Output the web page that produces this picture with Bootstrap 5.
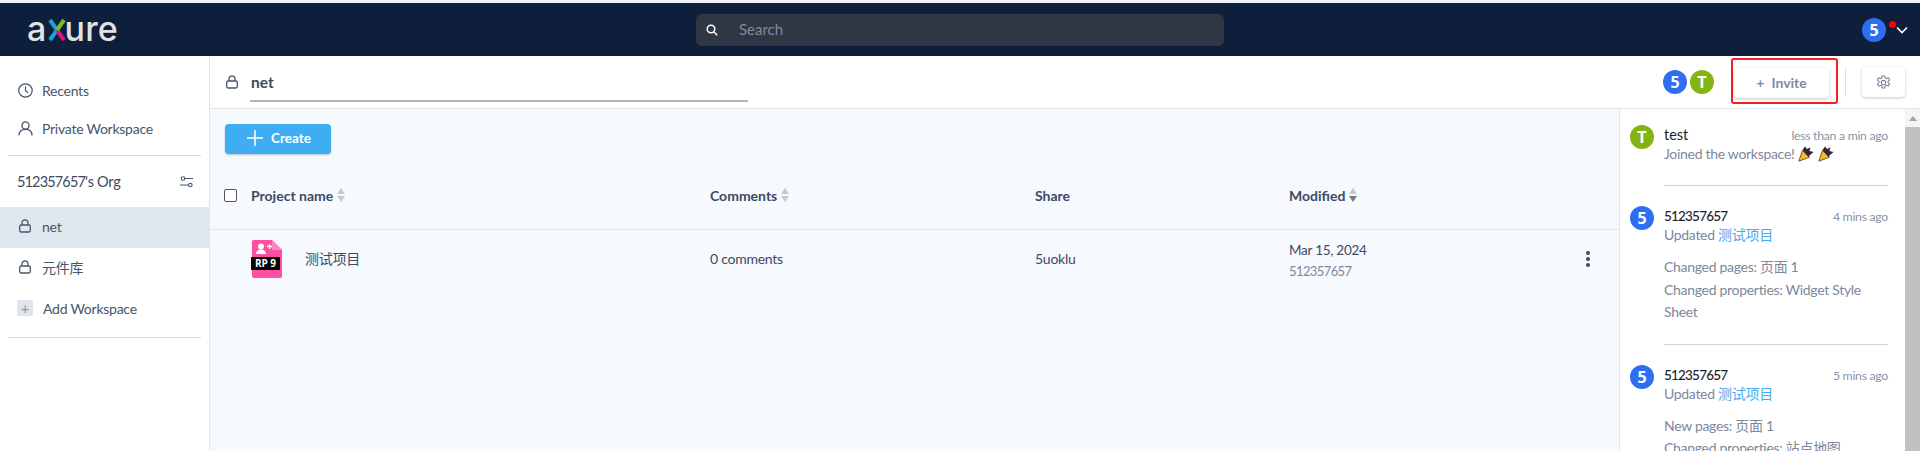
<!DOCTYPE html>
<html lang="en">
<head>
  <meta charset="UTF-8" />
  <meta name="viewport" content="width=device-width, initial-scale=1.0" />
  <title>Axure Cloud</title>
  <link href="https://cdn.jsdelivr.net/npm/bootstrap@5.3.0/dist/css/bootstrap.min.css" rel="stylesheet" />
  <style>
    html, body { height: 100%; }
    body {
      overflow: hidden;
      font-family: "Lato", "Noto Sans CJK SC", sans-serif;
      font-size: 13.5px;
      letter-spacing: -.25px;
      color: #3d4a63;
      background: #fff;
      border-top: 3px solid #eef0f7;
      display: flex;
      flex-direction: column;
    }
    .top-bar { height: 53px; background: #0e1f3b; flex: none; padding: 0 12px 0 27px; }
    .logo { width: 183px; color: #e2e2e2; font-size: 34px; line-height: 1; font-family: "Inter", sans-serif; font-weight: 500; letter-spacing: .2px; margin-top: -2px; }
    .logo svg { margin: 0 -1px 0 1px; vertical-align: -1px; }
    .search-box { width: 528px; height: 32px; margin-left: 486px; background: #2f3745; border-radius: 6px; padding-left: 10px; color: #7f8a99; font-size: 15px; letter-spacing: 0; gap: 21px; }
    .user-menu { margin-left: auto; gap: 10px; position: relative; }
    .avatar { width: 24px; height: 24px; border-radius: 50%; color: #fff; font-weight: 700; font-size: 16px; flex: none; font-family: "Open Sans", sans-serif; line-height: 1; letter-spacing: 0; }
    .av-blue { background: #2d6ff0; }
    .av-green { background: #84b414; }
    .red-dot { position: absolute; left: 27px; top: 3px; width: 7px; height: 7px; border-radius: 50%; background: #f00; }

    .side-bar { width: 210px; flex: none; border-right: 1px solid #e1e6ee; padding-top: 15px; }
    .side-item { height: 38px; padding-left: 18px; gap: 9px; font-size: 14px; color: #48546b; }
    .side-item.active-ws { height: 42px; background: #e1e7ef; }
    .side-item.ws { height: 41px; padding-left: 19px; gap: 11px; padding-bottom: 3px; }
    .side-item.add-ws { padding-left: 17px; gap: 10px; }
    .side-line { height: 1px; background: #d5dbe3; margin: 8px 8px 0; }
    .side-line.last-line { margin-top: 7px; }
    .org-row { height: 51px; padding: 0 16px 0 17px; font-size: 14.5px; }
    .org-num { letter-spacing: -.85px; }
    .add-box { width: 16px; height: 16px; background: #dfe5ed; border-radius: 2px; color: #8d99ab; font-size: 15px; line-height: 1; }

    .work-head { height: 53px; flex: none; border-bottom: 1px solid #e1e6ee; padding-left: 16px; }
    .ws-name { width: 498px; height: 38px; margin-left: 12px; margin-bottom: 0; margin-top: 8px; align-self: flex-start; border-bottom: 2px solid #b5b5b5; font-size: 15.5px; font-weight: 700; letter-spacing: 0; padding-top: 7px; padding-left: 1px; }
    .head-tools { margin-left: auto; padding-right: 15px; }
    .invite-wrap { border: 2px solid #f51f1f; border-radius: 3px; width: 107px; height: 46px; margin: -3px 7px 0 17px; padding: 8px 0 0 1px; }
    .tool-btn { height: 30px; background: #fff; border: 0; border-radius: 4px; box-shadow: 0 1px 3px rgba(40, 50, 70, .28); color: #7f8a9d; font-weight: 700; font-size: 14px; letter-spacing: 0; }
    .invite-btn { width: 95px; gap: 7px; }
    .gear-btn { width: 43px; margin-left: 16px; }
    .tool-sep { width: 1px; height: 30px; background: #dde2ea; }
    .av-first { margin-right: 3px; }

    .work-body { background: #f6f9fd; min-height: 0; }
    .list-pane { padding-top: 15px; }
    .create-btn { margin-left: 15px; width: 106px; height: 30px; background: #3fadf1; border: 0; border-radius: 4px; box-shadow: 0 1px 2px rgba(40, 60, 90, .3); color: #fff; font-weight: 700; font-size: 13.5px; gap: 8px; padding: 0 0 2px 22px; }
    .proj-grid { display: grid; grid-template-columns: 41px 459px 325px 254px 297px 33px; align-items: center; }
    .proj-head { height: 76px; padding-top: 8px; border-bottom: 1px solid #e1e6ee; font-weight: 700; font-size: 14px; letter-spacing: 0; color: #3d4a63; }
    .proj-head > div:first-child { padding-left: 14px; }
    .proj-row { height: 57px; font-size: 14px; }
    .check-box { display: block; width: 13px; height: 13px; border: 1px solid #555; border-radius: 2px; background: #fff; }
    .sort-mark { display: inline-block; vertical-align: -1px; margin-left: 4px; }
    .file-icon { position: relative; width: 30px; height: 38px; margin-left: 1px; margin-right: 23px; flex: none; }
    .rp-tag { position: absolute; left: -1px; top: 17px; width: 29px; height: 13px; background: #000; color: #fff; font-size: 10px; font-weight: 700; line-height: 13px; text-align: center; font-family: "Open Sans", sans-serif; letter-spacing: 0; }
    .date-cell { padding-top: 6px; }
    .date-sub { color: #7d889b; font-size: 13px; margin-top: 4px; letter-spacing: -.6px; }
    .date-main { line-height: 16px; font-size: 13.5px; }
    .kebab { width: 4px; gap: 2px; }
    .kebab i { display: block; width: 4px; height: 4px; border-radius: 50%; background: #3d4a63; }

    .feed-pane { width: 301px; flex: none; background: #fff; border-left: 1px solid #e1e6ee; overflow: hidden; }
    .feed-list { width: 285px; padding: 16px 17px 0 10px; }
    .feed-item { gap: 10px; }
    .feed-text { color: #7d889b; font-size: 14px; line-height: 20px; min-width: 0; flex: 1; letter-spacing: -.3px; }
    .feed-head { height: 19px; }
    .feed-sub { height: 20px; }
    .feed-name { color: #1a1f2b; font-size: 14.5px; letter-spacing: 0; }
    .feed-name.num-name { font-size: 13.5px; letter-spacing: -.8px; font-weight: 500; }
    .feed-time { color: #8a94a8; font-size: 12.3px; }
    .feed-link { color: #48a9ee; }
    .feed-detail { margin-top: 11px; line-height: 22.5px; }
    .detail-cjk { height: 22.5px; }
    .feed-line { height: 1px; background: #ccd3dc; margin: 20px 0 20px 34px; }
    .feed-line.first-line { margin-top: 21px; }
    .fake-scroll { width: 15px; flex: none; background: #f4f4f4; margin-left: auto; }
    .scroll-up { height: 18px; flex: none; }
    .scroll-up i { border-left: 4px solid transparent; border-right: 4px solid transparent; border-bottom: 5px solid #a3a3a3; }
    .scroll-thumb { flex: 1; background: #c1c1c1; }
  </style>
</head>
<body>

  <header class="top-bar d-flex align-items-center">
    <div class="logo">a<svg width="18" height="24" viewBox="0 0 18 24" fill="none" stroke-width="4"><path d="M2 2 L9 12 L2 22" stroke="#12a5e0" /><path d="M9 12 L16 22" stroke="#e0147f" /><path d="M9 12 L16 2" stroke="#7fba1d" /></svg>ure</div>
    <div class="search-box d-flex align-items-center">
      <svg width="12" height="12" viewBox="0 0 12 12" fill="none" stroke="#fff" stroke-width="1.5"><circle cx="5" cy="5" r="3.8" /><path d="M8 8l3.2 3.2" /></svg>
      <span>Search</span>
    </div>
    <div class="user-menu d-flex align-items-center">
      <span class="avatar av-blue d-flex align-items-center justify-content-center">5</span>
      <span class="red-dot"></span>
      <svg width="12" height="8" viewBox="0 0 12 8" fill="none" stroke="#fff" stroke-width="1.6"><path d="M1 1.500l5 5 5-5" /></svg>
    </div>
  </header>

  <div class="d-flex flex-grow-1 overflow-hidden">
    <nav class="side-bar">
      <div class="side-item d-flex align-items-center">
        <svg width="15" height="15" viewBox="0 0 15 15" fill="none" stroke="#48546b" stroke-width="1.2"><circle cx="7.5" cy="7.5" r="6.7" /><path d="M7.500 3.500v4.200l2.500 2" /></svg>
        <span>Recents</span>
      </div>
      <div class="side-item d-flex align-items-center">
        <svg width="15" height="15" viewBox="0 0 15 15" fill="none" stroke="#48546b" stroke-width="1.3"><circle cx="7.5" cy="4.5" r="3.6" /><path d="M1 14.500c0-4 2.500-6.200 6.500-6.200s6.500 2.200 6.500 6.200" /></svg>
        <span>Private Workspace</span>
      </div>
      <div class="side-line"></div>
      <div class="org-row d-flex align-items-center justify-content-between">
        <span><span class="org-num">512357657</span>'s Org</span>
        <svg width="13" height="12" viewBox="0 0 13 12" fill="none" stroke="#48546b" stroke-width="1.1"><circle cx="3" cy="2.500" r="1.800" /><path d="M5 2.500h8M0 9h8" /><circle cx="10.300" cy="9" r="1.800" /></svg>
      </div>
      <div class="side-item ws active-ws d-flex align-items-center">
        <svg width="12" height="14" viewBox="0 0 12 14" fill="none" stroke="#48546b" stroke-width="1.300"><rect x=".7" y="6" width="10.600" height="7" rx="1.500" /><path d="M3 6V3.800a3 3 0 0 1 6 0V6" /></svg>
        <span>net</span>
      </div>
      <div class="side-item ws d-flex align-items-center">
        <svg width="12" height="14" viewBox="0 0 12 14" fill="none" stroke="#48546b" stroke-width="1.300"><rect x=".7" y="6" width="10.600" height="7" rx="1.500" /><path d="M3 6V3.800a3 3 0 0 1 6 0V6" /></svg>
        <span>元件库</span>
      </div>
      <div class="side-item ws add-ws d-flex align-items-center">
        <span class="add-box d-flex align-items-center justify-content-center">+</span>
        <span>Add Workspace</span>
      </div>
      <div class="side-line last-line"></div>
    </nav>

    <main class="flex-grow-1 d-flex flex-column overflow-hidden">
      <div class="work-head d-flex align-items-center">
        <svg width="12" height="14" viewBox="0 0 12 14" fill="none" stroke="#48546b" stroke-width="1.300"><rect x=".7" y="6" width="10.600" height="7" rx="1.500" /><path d="M3 6V3.800a3 3 0 0 1 6 0V6" /></svg>
        <div class="ws-name">net</div>
        <div class="head-tools d-flex align-items-center">
          <span class="avatar av-blue av-first d-flex align-items-center justify-content-center">5</span>
          <span class="avatar av-green d-flex align-items-center justify-content-center">T</span>
          <div class="invite-wrap">
            <button class="tool-btn invite-btn d-flex align-items-center justify-content-center"><span>+</span><span>Invite</span></button>
          </div>
          <span class="tool-sep"></span>
          <button class="tool-btn gear-btn d-flex align-items-center justify-content-center">
            <svg width="15" height="15" viewBox="0 0 24 24" fill="none" stroke="#7f8a9d" stroke-width="1.800"><circle cx="12" cy="12" r="3.500" /><path d="M10 1.500h4l.7 3.200 2 1 3-1.300 2 3.400-2.400 2.200v2.200l2.400 2.200-2 3.400-3-1.300-2 1-.7 3.200h-4l-.7-3.200-2-1-3 1.300-2-3.400 2.400-2.200v-2.200L2.300 7.800l2-3.400 3 1.300 2-1z" /></svg>
          </button>
        </div>
      </div>

      <div class="work-body flex-grow-1 d-flex">
        <section class="list-pane flex-grow-1">
          <button class="create-btn d-flex align-items-center">
            <svg width="16" height="16" viewBox="0 0 16 16" stroke="#fff" stroke-width="1.500"><path d="M8 0v16M0 8h16" /></svg>
            <span>Create</span>
          </button>
          <div class="proj-grid proj-head">
            <div><span class="check-box"></span></div>
            <div>Project name<svg class="sort-mark" width="8" height="14" viewBox="0 0 8 14" fill="#c6c9ce"><path d="M4 0l4 6H0zM4 14L0 8h8z" /></svg></div>
            <div>Comments<svg class="sort-mark" width="8" height="14" viewBox="0 0 8 14" fill="#c6c9ce"><path d="M4 0l4 6H0zM4 14L0 8h8z" /></svg></div>
            <div>Share</div>
            <div>Modified<svg class="sort-mark" width="8" height="14" viewBox="0 0 8 14"><path fill="#c6c9ce" d="M4 0l4 6H0z" /><path fill="#777" d="M4 14L0 8h8z" /></svg></div>
            <div></div>
          </div>
          <div class="proj-grid proj-row">
            <div></div>
            <div class="d-flex align-items-center">
              <div class="file-icon">
                <svg width="30" height="38" viewBox="0 0 30 38">
                  <path fill="#ff4fa3" d="M2 0h18l10 10v26a2 2 0 0 1-2 2H2a2 2 0 0 1-2-2V2a2 2 0 0 1 2-2z" />
                  <path fill="#ff86c0" d="M20 0l10 10H20z" />
                  <circle cx="9" cy="6.500" r="3" fill="#fff" />
                  <path fill="#fff" d="M4 14c0-3 2-4.500 5-4.500s5 1.500 5 4.500z" />
                  <path stroke="#fff" stroke-width="1.300" d="M15 6.500h5M17.500 4v5" />
                </svg>
                <span class="rp-tag">RP 9</span>
              </div>
              <span>测试项目</span>
            </div>
            <div>0 comments</div>
            <div>5uoklu</div>
            <div class="date-cell">
              <div class="date-main">Mar 15, 2024</div>
              <div class="date-sub">512357657</div>
            </div>
            <div class="kebab d-flex flex-column"><i></i><i></i><i></i></div>
          </div>
        </section>

        <aside class="feed-pane d-flex">
          <div class="feed-list">
            <div class="feed-item d-flex">
              <span class="avatar av-green d-flex align-items-center justify-content-center">T</span>
              <div class="feed-text">
                <div class="feed-head d-flex justify-content-between align-items-baseline"><span class="feed-name">test</span><span class="feed-time">less than a min ago</span></div>
                <div class="feed-sub d-flex align-items-center gap-1">Joined the workspace!
                  <svg width="16" height="16" viewBox="0 0 16 16"><path fill="#f5b82e" stroke="#5a3d0c" stroke-width=".8" d="M.8 15.200l3.600-10.700 7 6.800z" /><path fill="#3a2430" d="M4.500 4l2.500-3.500 2 2.500 3.500-1.500-1 3.500 4 1-3.500 3-1.500 2z" /></svg>
                  <svg width="16" height="16" viewBox="0 0 16 16"><path fill="#f5b82e" stroke="#5a3d0c" stroke-width=".8" d="M.8 15.200l3.600-10.700 7 6.800z" /><path fill="#3a2430" d="M4.500 4l2.500-3.500 2 2.500 3.500-1.500-1 3.500 4 1-3.500 3-1.500 2z" /></svg>
                </div>
              </div>
            </div>
            <div class="feed-line first-line"></div>
            <div class="feed-item d-flex">
              <span class="avatar av-blue d-flex align-items-center justify-content-center">5</span>
              <div class="feed-text">
                <div class="feed-head d-flex justify-content-between align-items-baseline"><span class="feed-name num-name">512357657</span><span class="feed-time">4 mins ago</span></div>
                <div class="feed-sub">Updated <span class="feed-link">测试项目</span></div>
                <div class="feed-detail">
                  <div class="detail-cjk">Changed pages: 页面 1</div>
                  <div>Changed properties: Widget Style Sheet</div>
                </div>
              </div>
            </div>
            <div class="feed-line"></div>
            <div class="feed-item d-flex">
              <span class="avatar av-blue d-flex align-items-center justify-content-center">5</span>
              <div class="feed-text">
                <div class="feed-head d-flex justify-content-between align-items-baseline"><span class="feed-name num-name">512357657</span><span class="feed-time">5 mins ago</span></div>
                <div class="feed-sub">Updated <span class="feed-link">测试项目</span></div>
                <div class="feed-detail">
                  <div class="detail-cjk">New pages: 页面 1</div>
                  <div class="detail-cjk">Changed properties: 站点地图</div>
                </div>
              </div>
            </div>
          </div>
          <div class="fake-scroll d-flex flex-column">
            <div class="scroll-up d-flex align-items-center justify-content-center"><i></i></div>
            <div class="scroll-thumb"></div>
          </div>
        </aside>
      </div>
    </main>
  </div>

  <script src="https://cdn.jsdelivr.net/npm/bootstrap@5.3.0/dist/js/bootstrap.bundle.min.js"></script>
</body>
</html>
